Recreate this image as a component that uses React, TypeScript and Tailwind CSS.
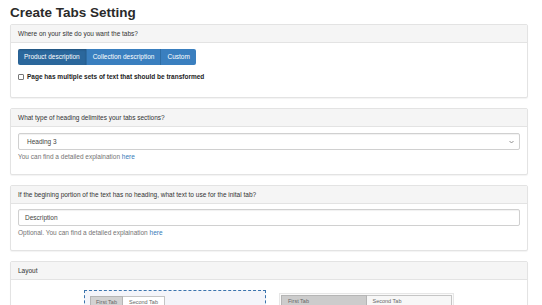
import React from 'react'

const font = { fontFamily: '"Liberation Sans", Arial, sans-serif' }

function Panel({ title, children, bodyClass }: { title: string; children: React.ReactNode; bodyClass: string }) {
  return (
    <div className="mb-[10px] w-[518px] rounded-[2px] border border-[#e3e3e3] bg-white shadow-[0_1px_1px_rgba(0,0,0,0.05)]">
      <div className="flex h-[18px] items-center border-b border-[#e3e3e3] bg-[#f5f5f5] px-[7px] text-[6.5px] text-[#333]">
        {title}
      </div>
      <div className={bodyClass}>{children}</div>
    </div>
  )
}

function Chevron() {
  return (
    <svg width="5" height="4" viewBox="0 0 5 4" className="text-[#777]">
      <path d="M0.5 1 L2.5 3 L4.5 1" fill="none" stroke="currentColor" strokeWidth="0.8" />
    </svg>
  )
}

export default function App() {
  return (
    <div className="h-[305px] w-[542px] overflow-hidden bg-white px-[10px] text-[#333]" style={font}>
      <h1 className="mb-[4px] pt-[5px] text-[13.5px] font-semibold leading-[15px] text-[#2a2a2a]">Create Tabs Setting</h1>

      {/* where to put tabs */}
      <Panel title="Where on your site do you want the tabs?" bodyClass="px-[7px] pt-[6px] pb-[15px]">
        <div className="flex h-[16px] w-fit overflow-hidden rounded-[2px] text-[6.5px] text-white">
          <div className="flex items-center bg-[#2b679c] px-[6px] shadow-[inset_0_1px_2px_rgba(0,0,0,0.2)]">Product description</div>
          <div className="flex items-center border-l border-[#2e6da4] bg-[#3a7fbf] px-[6px]">Collection description</div>
          <div className="flex items-center border-l border-[#2e6da4] bg-[#3a7fbf] px-[6px]">Custom</div>
        </div>
        <label className="mt-[7px] flex h-[10px] items-center gap-[3px] text-[6.5px] font-bold text-[#222]">
          <span className="h-[6px] w-[6px] rounded-[1px] border border-[#777] bg-white" />
          Page has multiple sets of text that should be transformed
        </label>
      </Panel>

      {/* heading type */}
      <Panel title="What type of heading delimites your tabs sections?" bodyClass="px-[7px] pt-[6px] pb-[12px]">
        <div className="flex h-[17px] items-center justify-between rounded-[2px] border border-[#d0d0d0] bg-white pl-[8px] pr-[5px] text-[6.5px] text-[#444] shadow-[inset_0_1px_1px_rgba(0,0,0,0.06)]">
          <span>Heading 3</span>
          <Chevron />
        </div>
        <p className="mt-[2px] text-[6.5px] leading-[10px] text-[#737373]">
          You can find a detailed explaination <span className="text-[#337ab7]">here</span>
        </p>
      </Panel>

      {/* initial tab text */}
      <Panel title="If the begining portion of the text has no heading, what text to use for the inital tab?" bodyClass="px-[7px] pt-[5px] pb-[12px]">
        <div className="flex h-[17px] items-center rounded-[2px] border border-[#d0d0d0] bg-white px-[6px] text-[6.5px] text-[#444] shadow-[inset_0_1px_1px_rgba(0,0,0,0.06)]">
          Description
        </div>
        <p className="mt-[2px] text-[6.5px] leading-[10px] text-[#737373]">
          Optional. You can find a detailed explaination <span className="text-[#337ab7]">here</span>
        </p>
      </Panel>

      {/* layout choice */}
      <Panel title="Layout" bodyClass="flex justify-center gap-[13px] pt-[10px] h-[60px]">
        <div className="h-[60px] w-[182px] border border-dashed border-[#3b74ad] bg-[#f4f5fa] p-[5px]">
          <div className="flex text-[5.5px] text-[#666]">
            <div className="flex h-[13px] items-center border border-[#b5b5b5] bg-[#d2d2d2] px-[5px]">First Tab</div>
            <div className="flex h-[13px] items-center border border-l-0 border-[#c5c5c5] bg-white px-[6px]">Second Tab</div>
          </div>
        </div>
        <div className="mt-[3px] h-[60px] w-[175px] border border-[#e6e6e6] bg-[#fafafa] p-[1px]">
          <div className="flex text-[5.5px] text-[#666]">
            <div className="flex h-[13px] w-1/2 items-center border border-[#b5b5b5] bg-[#cccccc] px-[6px]">First Tab</div>
            <div className="flex h-[13px] w-1/2 items-center border border-l-0 border-[#c5c5c5] bg-[#f7f7f7] px-[6px]">Second Tab</div>
          </div>
        </div>
      </Panel>
    </div>
  )
}
